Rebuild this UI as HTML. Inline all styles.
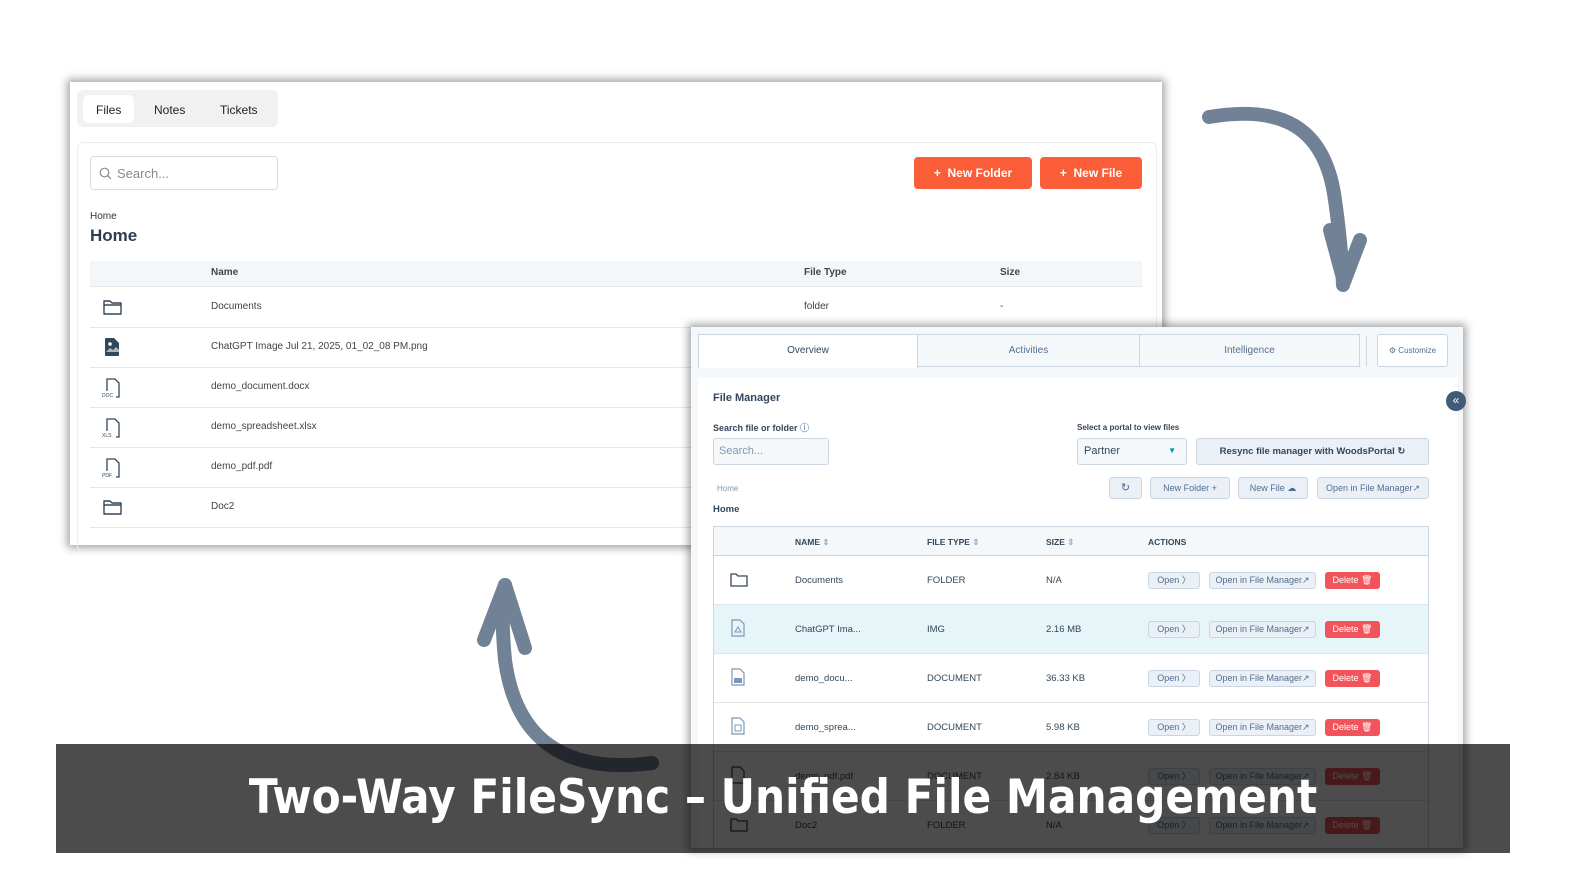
<!DOCTYPE html>
<html><head><meta charset="utf-8"><style>
*{box-sizing:border-box;margin:0;padding:0}
body{width:1580px;height:888px;background:#fff;position:relative;overflow:hidden;font-family:"Liberation Sans",sans-serif;color:#33475b}
.a{position:absolute}
.lp{left:70px;top:82px;width:1092px;height:463px;background:#fff;box-shadow:0 0 8px 3px rgba(0,0,0,.35)}
.t{font-size:12px;white-space:nowrap}
.rp{left:691px;top:327px;width:772px;height:521px;background:#f5f8fa;box-shadow:0 0 8px 3px rgba(0,0,0,.35)}
.btn{position:absolute;background:#eaf0f6;border:1px solid #cbd6e2;border-radius:3px;font-size:9px;color:#506e91;text-align:center}
.del{position:absolute;background:#f2545b;border-radius:3px;font-size:9px;color:#fff;text-align:center}
.hdr{font-size:8.5px;font-weight:bold;color:#33475b}
</style></head><body>

<div class="a lp"></div>
<div class="a" style="left:77px;top:90px;width:201px;height:37px;background:#f1f1f1;border-radius:6px"></div>
<div class="a" style="left:83px;top:95px;width:51px;height:28px;background:#fff;border-radius:5px"></div>
<div class="a t" style="left:96px;top:103px;color:#222">Files</div>
<div class="a t" style="left:154px;top:103px;color:#222">Notes</div>
<div class="a t" style="left:220px;top:103px;color:#222">Tickets</div>
<div class="a" style="left:77px;top:142px;width:1080px;height:410px;border:1px solid #eee;border-radius:6px"></div>
<div class="a" style="left:90px;top:156px;width:188px;height:34px;border:1px solid #dcdcdc;border-radius:4px"></div>
<svg class="a" style="left:99px;top:167px" width="13" height="13"><circle cx="5.5" cy="5.5" r="4.3" fill="none" stroke="#888" stroke-width="1.2"/><line x1="8.7" y1="8.7" x2="12" y2="12" stroke="#888" stroke-width="1.2"/></svg>
<div class="a" style="left:117px;top:166px;font-size:13px;color:#888">Search...</div>
<div class="a" style="left:914px;top:157px;width:118px;height:32px;background:#fa5d37;border-radius:4px;color:#fff;font-size:12px;font-weight:bold;text-align:center;line-height:32px">+&nbsp; New Folder</div>
<div class="a" style="left:1040px;top:157px;width:102px;height:32px;background:#fa5d37;border-radius:4px;color:#fff;font-size:12px;font-weight:bold;text-align:center;line-height:32px">+&nbsp; New File</div>
<div class="a" style="left:90px;top:211px;font-size:10px;color:#333">Home</div>
<div class="a" style="left:90px;top:226px;font-size:17px;font-weight:bold;color:#2d3e50">Home</div>
<div class="a" style="left:90px;top:261px;width:1052px;height:26px;background:#f4f7fa;border-bottom:1px solid #e5e8eb"></div>
<div class="a t" style="left:211px;top:267px;font-size:10px;font-weight:bold;color:#444">Name</div>
<div class="a t" style="left:804px;top:267px;font-size:10px;font-weight:bold;color:#444">File Type</div>
<div class="a t" style="left:1000px;top:267px;font-size:10px;font-weight:bold;color:#444">Size</div>
<div class="a t" style="left:211px;top:301px;font-size:10px;color:#444">Documents</div>
<div class="a t" style="left:804px;top:301px;font-size:10px;color:#444">folder</div>
<div class="a t" style="left:1000px;top:301px;font-size:10px;color:#444">-</div>
<div class="a t" style="left:211px;top:341px;font-size:10px;color:#444">ChatGPT Image Jul 21, 2025, 01_02_08 PM.png</div>
<div class="a t" style="left:211px;top:381px;font-size:10px;color:#444">demo_document.docx</div>
<div class="a t" style="left:211px;top:421px;font-size:10px;color:#444">demo_spreadsheet.xlsx</div>
<div class="a t" style="left:211px;top:461px;font-size:10px;color:#444">demo_pdf.pdf</div>
<div class="a t" style="left:211px;top:501px;font-size:10px;color:#444">Doc2</div>
<div class="a" style="left:90px;top:327px;width:1052px;height:1px;background:#e5e8eb"></div>
<div class="a" style="left:90px;top:367px;width:1052px;height:1px;background:#e5e8eb"></div>
<div class="a" style="left:90px;top:407px;width:1052px;height:1px;background:#e5e8eb"></div>
<div class="a" style="left:90px;top:447px;width:1052px;height:1px;background:#e5e8eb"></div>
<div class="a" style="left:90px;top:487px;width:1052px;height:1px;background:#e5e8eb"></div>
<div class="a" style="left:90px;top:527px;width:1052px;height:1px;background:#e5e8eb"></div>
<svg class="a" style="left:102px;top:298px" width="22" height="18"><path d="M2 3h6l2 2h9v11H2z M2 7h17" fill="none" stroke="#33475b" stroke-width="1.4" stroke-linejoin="round"/></svg>
<svg class="a" style="left:102px;top:498px" width="22" height="18"><path d="M2 3h6l2 2h9v11H2z M2 7h17" fill="none" stroke="#33475b" stroke-width="1.4" stroke-linejoin="round"/></svg>
<svg class="a" style="left:104px;top:337px" width="16" height="20"><path d="M2 1h8l5 5v12a1 1 0 0 1-1 1H2a1 1 0 0 1-1-1V2a1 1 0 0 1 1-1z" fill="#33475b"/><circle cx="6" cy="7" r="1.8" fill="#fff"/><path d="M2 15l4-4 3 2 3-3 3 3v2H2z" fill="#fff" opacity=".6"/></svg>
<svg class="a" style="left:102px;top:377px" width="20" height="22"><path d="M5 14V2h8l4 4v14h-3" fill="none" stroke="#33475b" stroke-width="1.3"/><text x="0" y="20" font-size="5" fill="#33475b" font-family="Liberation Sans">DOC</text></svg>
<svg class="a" style="left:102px;top:417px" width="20" height="22"><path d="M5 14V2h8l4 4v14h-3" fill="none" stroke="#33475b" stroke-width="1.3"/><text x="0" y="20" font-size="5" fill="#33475b" font-family="Liberation Sans">XLS</text></svg>
<svg class="a" style="left:102px;top:457px" width="20" height="22"><path d="M5 14V2h8l4 4v14h-3" fill="none" stroke="#33475b" stroke-width="1.3"/><text x="0" y="20" font-size="5" fill="#33475b" font-family="Liberation Sans">PDF</text></svg>

<div class="a rp"></div>
<div class="a" style="left:698px;top:334px;width:662px;height:33px;border:1px solid #cbd6e2;background:#f5f8fa"></div>
<div class="a" style="left:698px;top:334px;width:220px;height:34px;background:#fff;border:1px solid #cbd6e2;border-bottom:none"></div>
<div class="a" style="left:1139px;top:334px;width:1px;height:33px;background:#cbd6e2"></div>
<div class="a t" style="left:698px;top:345px;width:220px;text-align:center;font-size:10px">Overview</div>
<div class="a t" style="left:918px;top:345px;width:221px;text-align:center;font-size:10px;color:#516f90">Activities</div>
<div class="a t" style="left:1139px;top:345px;width:221px;text-align:center;font-size:10px;color:#516f90">Intelligence</div>
<div class="a" style="left:1366px;top:336px;width:1px;height:30px;background:#cbd6e2"></div>
<div class="a" style="left:1377px;top:334px;width:71px;height:33px;background:#fff;border:1px solid #cbd6e2;border-radius:3px;font-size:8px;color:#516f90;line-height:31px;text-align:center">⚙ Customize</div>
<div class="a" style="left:698px;top:378px;width:759px;height:470px;background:#fff"></div>
<div class="a t" style="left:713px;top:392px;font-size:11px;font-weight:bold">File Manager</div>
<div class="a t" style="left:713px;top:421px;font-size:9px;font-weight:bold">Search file or folder <span style="color:#7c98b6">ⓘ</span></div>
<div class="a" style="left:713px;top:438px;width:116px;height:27px;background:#f5f8fa;border:1px solid #cbd6e2;border-radius:3px;font-size:11px;color:#7c98b6;padding:6px 5px">Search...</div>
<div class="a t" style="left:1077px;top:423px;font-size:8px;font-weight:bold">Select a portal to view files</div>
<div class="a" style="left:1077px;top:438px;width:110px;height:27px;background:#f5f8fa;border:1px solid #cbd6e2;border-radius:3px;font-size:11px;padding:6px 6px">Partner<span style="position:absolute;right:10px;top:7px;color:#0091ae;font-size:8px">▼</span></div>
<div class="a" style="left:1196px;top:438px;width:233px;height:27px;background:#eaf0f6;border:1px solid #cbd6e2;border-radius:3px;font-size:9.5px;font-weight:bold;text-align:center;line-height:25px">Resync file manager with WoodsPortal ↻</div>
<div class="a t" style="left:717px;top:484px;font-size:8px;color:#7c98b6">Home</div>
<div class="a t" style="left:713px;top:504px;font-size:9.5px;font-weight:bold">Home</div>
<div class="btn" style="left:1109px;top:477px;width:33px;height:22px;line-height:20px;font-size:11px">↻</div>
<div class="btn" style="left:1150px;top:477px;width:80px;height:22px;line-height:20px">New Folder +</div>
<div class="btn" style="left:1238px;top:477px;width:70px;height:22px;line-height:20px">New File ☁</div>
<div class="btn" style="left:1317px;top:477px;width:112px;height:22px;line-height:20px">Open in File Manager↗</div>
<div class="a" style="left:713px;top:526px;width:716px;height:322px;border:1px solid #cbd6e2;border-bottom:none"></div>
<div class="a" style="left:714px;top:527px;width:714px;height:29px;background:#f5f8fa;border-bottom:1px solid #cbd6e2"></div>
<div class="a hdr" style="left:795px;top:537px">NAME <span style="color:#9fb0c2">⇕</span></div>
<div class="a hdr" style="left:927px;top:537px">FILE TYPE <span style="color:#9fb0c2">⇕</span></div>
<div class="a hdr" style="left:1046px;top:537px">SIZE <span style="color:#9fb0c2">⇕</span></div>
<div class="a hdr" style="left:1148px;top:537px">ACTIONS</div>
<div class="a" style="left:714px;top:605px;width:714px;height:49px;background:#e5f5f8"></div>
<div class="a" style="left:714px;top:604px;width:714px;height:1px;background:#dfe3eb"></div>
<div class="a" style="left:714px;top:653px;width:714px;height:1px;background:#dfe3eb"></div>
<div class="a" style="left:714px;top:702px;width:714px;height:1px;background:#dfe3eb"></div>
<div class="a" style="left:714px;top:751px;width:714px;height:1px;background:#dfe3eb"></div>
<div class="a" style="left:714px;top:800px;width:714px;height:1px;background:#dfe3eb"></div>

<div style="position:absolute;left:0;top:0">
<div class="a t" style="left:795px;top:575px;font-size:9.5px">Documents</div><div class="a t" style="left:927px;top:575px;font-size:9.5px">FOLDER</div><div class="a t" style="left:1046px;top:575px;font-size:9.5px">N/A</div>
<div class="a t" style="left:795px;top:624px;font-size:9.5px">ChatGPT Ima...</div><div class="a t" style="left:927px;top:624px;font-size:9.5px">IMG</div><div class="a t" style="left:1046px;top:624px;font-size:9.5px">2.16 MB</div>
<div class="a t" style="left:795px;top:673px;font-size:9.5px">demo_docu...</div><div class="a t" style="left:927px;top:673px;font-size:9.5px">DOCUMENT</div><div class="a t" style="left:1046px;top:673px;font-size:9.5px">36.33 KB</div>
<div class="a t" style="left:795px;top:722px;font-size:9.5px">demo_sprea...</div><div class="a t" style="left:927px;top:722px;font-size:9.5px">DOCUMENT</div><div class="a t" style="left:1046px;top:722px;font-size:9.5px">5.98 KB</div>
<div class="a t" style="left:795px;top:771px;font-size:9.5px">demo_pdf.pdf</div><div class="a t" style="left:927px;top:771px;font-size:9.5px">DOCUMENT</div><div class="a t" style="left:1046px;top:771px;font-size:9.5px">2.84 KB</div>
<div class="a t" style="left:795px;top:820px;font-size:9.5px">Doc2</div><div class="a t" style="left:927px;top:820px;font-size:9.5px">FOLDER</div><div class="a t" style="left:1046px;top:820px;font-size:9.5px">N/A</div>
</div>
<svg class="a" style="left:730px;top:572px" width="18" height="15"><path d="M1 2h5l2 2h9v10H1z" fill="none" stroke="#33475b" stroke-width="1.3"/></svg>
<svg class="a" style="left:730px;top:817px" width="18" height="15"><path d="M1 2h5l2 2h9v10H1z" fill="none" stroke="#33475b" stroke-width="1.3"/></svg>
<svg class="a" style="left:731px;top:619px" width="14" height="18"><path d="M1 1h8l4 4v12H1z" fill="none" stroke="#7c98b6" stroke-width="1.2"/><path d="M4 13l3-5 3 5z" fill="none" stroke="#7c98b6"/></svg>
<svg class="a" style="left:731px;top:668px" width="14" height="18"><path d="M1 1h8l4 4v12H1z" fill="none" stroke="#7c98b6" stroke-width="1.2"/><rect x="3" y="10" width="8" height="5" fill="#7c98b6"/></svg>
<svg class="a" style="left:731px;top:717px" width="14" height="18"><path d="M1 1h8l4 4v12H1z" fill="none" stroke="#7c98b6" stroke-width="1.2"/><rect x="4" y="8" width="6" height="6" fill="none" stroke="#7c98b6"/></svg>
<svg class="a" style="left:731px;top:766px" width="14" height="18"><path d="M1 1h8l4 4v12H1z" fill="none" stroke="#33475b" stroke-width="1.2"/></svg>

<div class="btn" style="left:1148px;top:572px;width:52px;height:17px;line-height:15px">Open 〉</div><div class="btn" style="left:1209px;top:572px;width:107px;height:17px;line-height:15px">Open in File Manager↗</div><div class="del" style="left:1325px;top:572px;width:55px;height:17px;line-height:17px">Delete 🗑</div>
<div class="btn" style="left:1148px;top:621px;width:52px;height:17px;line-height:15px">Open 〉</div><div class="btn" style="left:1209px;top:621px;width:107px;height:17px;line-height:15px">Open in File Manager↗</div><div class="del" style="left:1325px;top:621px;width:55px;height:17px;line-height:17px">Delete 🗑</div>
<div class="btn" style="left:1148px;top:670px;width:52px;height:17px;line-height:15px">Open 〉</div><div class="btn" style="left:1209px;top:670px;width:107px;height:17px;line-height:15px">Open in File Manager↗</div><div class="del" style="left:1325px;top:670px;width:55px;height:17px;line-height:17px">Delete 🗑</div>
<div class="btn" style="left:1148px;top:719px;width:52px;height:17px;line-height:15px">Open 〉</div><div class="btn" style="left:1209px;top:719px;width:107px;height:17px;line-height:15px">Open in File Manager↗</div><div class="del" style="left:1325px;top:719px;width:55px;height:17px;line-height:17px">Delete 🗑</div>
<div class="btn" style="left:1148px;top:768px;width:52px;height:17px;line-height:15px">Open 〉</div><div class="btn" style="left:1209px;top:768px;width:107px;height:17px;line-height:15px">Open in File Manager↗</div><div class="del" style="left:1325px;top:768px;width:55px;height:17px;line-height:17px">Delete 🗑</div>
<div class="btn" style="left:1148px;top:817px;width:52px;height:17px;line-height:15px">Open 〉</div><div class="btn" style="left:1209px;top:817px;width:107px;height:17px;line-height:15px">Open in File Manager↗</div><div class="del" style="left:1325px;top:817px;width:55px;height:17px;line-height:17px">Delete 🗑</div>

<div class="a" style="left:1446px;top:391px;width:20px;height:20px;border-radius:50%;background:#425b76;color:#fff;font-size:12px;line-height:19px;text-align:center">«</div>

<svg class="a" style="left:0;top:0" width="1580" height="888">
<g fill="none" stroke="#718296" stroke-width="14" stroke-linecap="round" stroke-linejoin="round">
<path d="M1209 117 C1280 105 1325 125 1335 200 C1340 235 1342 260 1343 285"/>
<path d="M1330 230 L1344 282 L1360 240"/>
<path d="M652 763 C560 775 515 735 505 660 C502 630 502 605 505 585"/>
<path d="M484 640 L505 585 L525 648"/>
</g>
</svg>

<div class="a" style="left:56px;top:744px;width:1454px;height:109px;background:rgba(0,0,0,0.7)"></div>
<div class="a" style="left:56px;top:770px;width:1454px;text-align:center;color:#fff;font-size:47px;font-weight:bold;white-space:nowrap;font-family:'DejaVu Sans Condensed','Liberation Sans',sans-serif">Two-Way FileSync – Unified File Management</div>
</body></html>
